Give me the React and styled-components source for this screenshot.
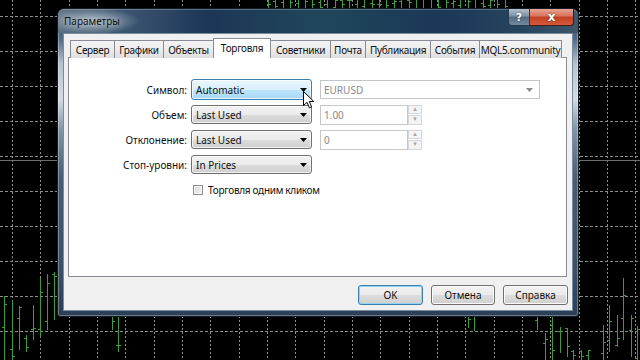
import React from 'react';
import styled, { createGlobalStyle, css } from 'styled-components';

const GlobalStyle = createGlobalStyle`
  html, body {
    margin: 0;
    padding: 0;
    background: #000;
  }
  body {
    font-family: "Noto Sans", "DejaVu Sans", sans-serif;
  }
`;

const tabs = [
  { label: 'Сервер', w: 45 },
  { label: 'Графики', w: 50 },
  { label: 'Объекты', w: 51 },
  { label: 'Торговля', w: 58, active: true },
  { label: 'Советники', w: 61 },
  { label: 'Почта', w: 36 },
  { label: 'Публикация', w: 66 },
  { label: 'События', w: 50 },
  { label: 'MQL5.community', w: 83 },
];

// visible OHLC bars of the chart behind the dialog: x, high, low
const bottomBars = [
  [4, 296, 362], [12, 300, 362], [19, 306, 350], [26, 335, 352], [33, 305, 340],
  [40, 278, 337], [47, 274, 330], [54, 272, 320], [112, 310, 330], [118, 310, 352],
  [468, 310, 328], [474, 310, 331], [537, 310, 330], [545, 333, 360], [552, 310, 360],
  [560, 327, 353], [567, 328, 357], [573, 350, 362], [581, 350, 362], [588, 350, 362],
  [603, 325, 362], [609, 305, 352], [617, 315, 347], [623, 278, 340], [631, 315, 357],
  [637, 326, 362],
];

const rand = (seed) => {
  let s = seed;
  return () => {
    s = (s * 9301 + 49297) % 233280;
    return s / 233280;
  };
};

const ChartBackdrop = () => {
  const r = rand(7);
  const topBars = [];
  for (let x = 268; x < 508; x += 7.4) {
    topBars.push([Math.round(x), -4 + r() * 4, 12]);
  }
  const all = [...topBars, ...bottomBars];
  const hLines = [];
  for (let y = 16; y < 360; y += 35) hLines.push(y);
  const vLines = [];
  for (let x = 12; x < 640; x += 28.33) vLines.push(Math.round(x) + 0.5);

  return (
    <Backdrop width="640" height="360" viewBox="0 0 640 360">
      {hLines.map((y) => (
        <line key={'h' + y} x1="0" x2="640" y1={y + 0.5} y2={y + 0.5} stroke="#8c8c8c" strokeDasharray="3 2" />
      ))}
      {vLines.map((x) => (
        <line key={'v' + x} x1={x} x2={x} y1="0" y2="360" stroke="#8c8c8c" strokeDasharray="2 2" />
      ))}
      <line x1="0" x2="640" y1="160.5" y2="160.5" stroke="#6e6e6e" />
      {all.map(([x, hi, lo], i) => {
        const o = hi + (lo - hi) * r();
        const c = hi + (lo - hi) * r();
        return (
          <g key={'b' + i} stroke="#3a9e3a" strokeWidth="1">
            <line x1={x + 0.5} x2={x + 0.5} y1={hi} y2={lo} />
            <line x1={x - 2} x2={x} y1={Math.round(o) + 0.5} y2={Math.round(o) + 0.5} />
            <line x1={x + 1} x2={x + 3} y1={Math.round(c) + 0.5} y2={Math.round(c) + 0.5} />
          </g>
        );
      })}
    </Backdrop>
  );
};

const ArrowDown = ({ color = '#000' }) => (
  <svg width="7" height="4" viewBox="0 0 7 4">
    <path d="M0 0 H7 L3.5 4 Z" fill={color} />
  </svg>
);

const Pointer = () => (
  <Cursor width="12" height="18" viewBox="0 0 12 18">
    <path d="M0.5 0.5 V14.5 L4 11.3 L6.4 16.8 L8.6 15.8 L6.3 10.5 H10.8 Z" fill="#fff" stroke="#000" strokeWidth="1" strokeLinejoin="round" />
  </Cursor>
);

export default function App() {
  return (
    <Page>
      <GlobalStyle />
      <ChartBackdrop />
      <Window>
        <TitleBar>
          <Title>Параметры</Title>
          <CaptionButtons>
            <CaptionButton $kind="help">?</CaptionButton>
            <CaptionButton $kind="close">x</CaptionButton>
          </CaptionButtons>
        </TitleBar>
        <Client>
          <TabStrip>
            {tabs.map((t) => (
              <Tab key={t.label} $w={t.w} $active={t.active}>
                {t.label}
              </Tab>
            ))}
          </TabStrip>
          <TabPanel>
            <Form>
              <Label>Символ:</Label>
              <Combo $hot>
                <span>Automatic</span>
                <ArrowDown />
              </Combo>
              <WideCombo>
                <span>EURUSD</span>
                <ArrowDown color="#8a8a8a" />
              </WideCombo>

              <Label>Объем:</Label>
              <Combo>
                <span>Last Used</span>
                <ArrowDown />
              </Combo>
              <SpinField>
                <Edit>1.00</Edit>
                <Spinner>
                  <SpinPart>▴</SpinPart>
                  <SpinPart>▾</SpinPart>
                </Spinner>
              </SpinField>

              <Label>Отклонение:</Label>
              <Combo>
                <span>Last Used</span>
                <ArrowDown />
              </Combo>
              <SpinField>
                <Edit>0</Edit>
                <Spinner>
                  <SpinPart>▴</SpinPart>
                  <SpinPart>▾</SpinPart>
                </Spinner>
              </SpinField>

              <Label>Стоп-уровни:</Label>
              <Combo>
                <span>In Prices</span>
                <ArrowDown />
              </Combo>
              <span />

              <span />
              <CheckRow>
                <CheckBox />
                Торговля одним кликом
              </CheckRow>
            </Form>
          </TabPanel>
          <ButtonRow>
            <Button $default>OK</Button>
            <Button $w={64}>Отмена</Button>
            <Button>Справка</Button>
          </ButtonRow>
        </Client>
      </Window>
      <Pointer />
    </Page>
  );
}

const Page = styled.div`
  position: relative;
  width: 640px;
  height: 360px;
  box-sizing: border-box;
  overflow: hidden;
  background: #000;
  padding: 8px 0 0 57px;
`;

const Backdrop = styled.svg`
  position: absolute;
  left: 0;
  top: 0;
  shape-rendering: crispEdges;
`;

const Cursor = styled.svg`
  position: absolute;
  left: 303px;
  top: 91px;
`;

const Window = styled.div`
  position: relative;
  width: 522px;
  height: 309px;
  box-sizing: border-box;
  display: flex;
  flex-direction: column;
  padding: 0 5px 5px;
  border: 1px solid #111c27;
  border-radius: 7px 7px 3px 3px;
  background: linear-gradient(
    to bottom,
    #2b4560 0px,
    #516c84 30px,
    #b6c4d0 55px,
    #d3dce4 90px,
    #8196a8 120px,
    #455c72 170px,
    #3a5066 260px,
    #2a3f55 100%
  );
  box-shadow: inset 0 0 0 1px rgba(255, 255, 255, 0.3);
`;

const TitleBar = styled.div`
  height: 24px;
  margin: 0 -5px;
  padding-left: 6px;
  display: flex;
  align-items: center;
  border-radius: 6px 6px 0 0;
  background:
    radial-gradient(ellipse 48px 13px at 34px 12px, rgba(196, 206, 214, 0.8), rgba(196, 206, 214, 0) 100%),
    linear-gradient(
      to right,
      #5d7184 0px,
      #3a5470 70px,
      #1c3656 150px,
      #20465b 260px,
      #1a3857 380px,
      #25445e 460px,
      #3d566b 100%
    );
  box-shadow: inset 0 1px 0 rgba(255, 255, 255, 0.25);
`;

const Title = styled.div`
  font-size: 10px;
  color: #111;
  text-shadow: 0 0 6px rgba(255, 255, 255, 0.6);
`;

const CaptionButtons = styled.div`
  margin-left: auto;
  margin-right: 4px;
  align-self: flex-start;
  display: flex;
`;

const CaptionButton = styled.div`
  height: 17px;
  box-sizing: border-box;
  display: flex;
  align-items: center;
  justify-content: center;
  color: #fff;
  font-family: "DejaVu Sans", sans-serif;
  font-weight: bold;
  text-shadow: 0 0 2px rgba(0, 0, 0, 0.6);
  ${(p) =>
    p.$kind === 'help'
      ? css`
          width: 22px;
          font-size: 11px;
          border: 1px solid #2b3a48;
          border-top: none;
          border-radius: 0 0 0 4px;
          background: linear-gradient(to bottom, #b2c0cc 0%, #7d92a5 45%, #546b80 50%, #6f8ba4 100%);
        `
      : css`
          width: 44px;
          font-size: 12px;
          border: 1px solid #4a1a10;
          border-top: none;
          border-left: none;
          border-radius: 0 0 4px 0;
          background: linear-gradient(to bottom, #e7a594 0%, #d6715a 45%, #c2401f 50%, #d35a3c 100%);
        `}
`;

const Client = styled.div`
  flex: 1;
  display: flex;
  flex-direction: column;
  padding: 5px 5px 0 4px;
  background: #f0f0f0;
  border: 1px solid #7a8c9c;
`;

const TabStrip = styled.div`
  height: 19px;
  display: flex;
  align-items: flex-end;
  padding-left: 3px;
  margin-bottom: -1px;
  position: relative;
  z-index: 1;
`;

const Tab = styled.div`
  width: ${(p) => p.$w}px;
  box-sizing: border-box;
  display: flex;
  align-items: center;
  justify-content: center;
  font-size: 10px;
  letter-spacing: -0.3px;
  color: #111;
  white-space: nowrap;
  border: 1px solid #898c95;
  border-bottom: none;
  margin-left: -1px;
  ${(p) =>
    p.$active
      ? css`
          height: 20px;
          padding-bottom: 2px;
          background: #fff;
          position: relative;
          z-index: 2;
        `
      : css`
          height: 18px;
          background: linear-gradient(to bottom, #f4f4f4 0%, #ebebeb 50%, #dfdfdf 100%);
        `}
`;

const TabPanel = styled.div`
  height: 220px;
  box-sizing: border-box;
  background: #fff;
  border: 1px solid #898c95;
  padding-top: 21px;
`;

const Form = styled.div`
  display: grid;
  grid-template-columns: 118px 121px 224px;
  grid-auto-rows: 21px;
  column-gap: 4px;
  row-gap: 4px;
  font-size: 10px;
  color: #111;
`;

const Label = styled.div`
  display: flex;
  align-items: center;
  justify-content: flex-end;
`;

const Combo = styled.div`
  height: 19px;
  align-self: center;
  box-sizing: border-box;
  display: flex;
  align-items: center;
  justify-content: space-between;
  padding: 0 4px 0 4px;
  border: 1px solid #707070;
  border-radius: 3px;
  background: linear-gradient(to bottom, #f2f2f2 0%, #ebebeb 50%, #dddddd 50%, #cfcfcf 100%);
  box-shadow: inset 0 0 0 1px rgba(255, 255, 255, 0.7);
  ${(p) =>
    p.$hot &&
    css`
      height: 21px;
      border-color: #3c7fb1;
      background: linear-gradient(to bottom, #eaf6fd 0%, #d9f0fc 50%, #bee6fd 50%, #a7d9f5 100%);
    `}
`;

const WideCombo = styled.div`
  margin-left: 4px;
  height: 19px;
  width: 220px;
  align-self: center;
  box-sizing: border-box;
  display: flex;
  align-items: center;
  justify-content: space-between;
  padding: 0 6px 0 3px;
  border: 1px solid #c2c5c9;
  background: #fff;
  color: #8a8a8a;
`;

const SpinField = styled.div`
  margin-left: 4px;
  height: 20px;
  align-self: center;
  display: flex;
`;

const Edit = styled.div`
  width: 88px;
  box-sizing: border-box;
  padding: 0 3px;
  display: flex;
  align-items: center;
  border: 1px solid #c6c8cc;
  background: #fff;
  color: #8a8a8a;
`;

const Spinner = styled.div`
  width: 14px;
  display: flex;
  flex-direction: column;
  gap: 1px;
`;

const SpinPart = styled.div`
  flex: 1;
  box-sizing: border-box;
  border: 1px solid #d4d6d9;
  background: #f4f4f4;
  color: #a5a5a5;
  font-size: 7px;
  line-height: 7px;
  display: flex;
  align-items: center;
  justify-content: center;
  font-family: "DejaVu Sans", sans-serif;
`;

const CheckRow = styled.div`
  grid-column: 2 / span 2;
  display: flex;
  align-items: center;
  gap: 5px;
  padding-left: 2px;
  white-space: nowrap;
  letter-spacing: -0.3px;
`;

const CheckBox = styled.div`
  width: 10px;
  height: 10px;
  box-sizing: border-box;
  border: 1px solid #8f8f8f;
  background: linear-gradient(135deg, #d8d8d8 0%, #f4f4f4 100%);
  box-shadow: inset 0 0 0 1px #f6f6f6;
`;

const ButtonRow = styled.div`
  display: flex;
  justify-content: flex-end;
  gap: 8px;
  margin-top: 8px;
  margin-right: -1px;
`;

const Button = styled.div`
  width: ${(p) => p.$w || 65}px;
  height: 20px;
  box-sizing: border-box;
  display: flex;
  align-items: center;
  justify-content: center;
  font-size: 10px;
  color: #111;
  border: 1px solid #707070;
  border-radius: 3px;
  background: linear-gradient(to bottom, #f2f2f2 0%, #ebebeb 50%, #dddddd 50%, #cfcfcf 100%);
  box-shadow: inset 0 0 0 1px #fbfbfb;
  ${(p) =>
    p.$default &&
    css`
      border-color: #3c7fb1;
      box-shadow: inset 0 0 0 1px #8fd4f5;
    `}
`;
